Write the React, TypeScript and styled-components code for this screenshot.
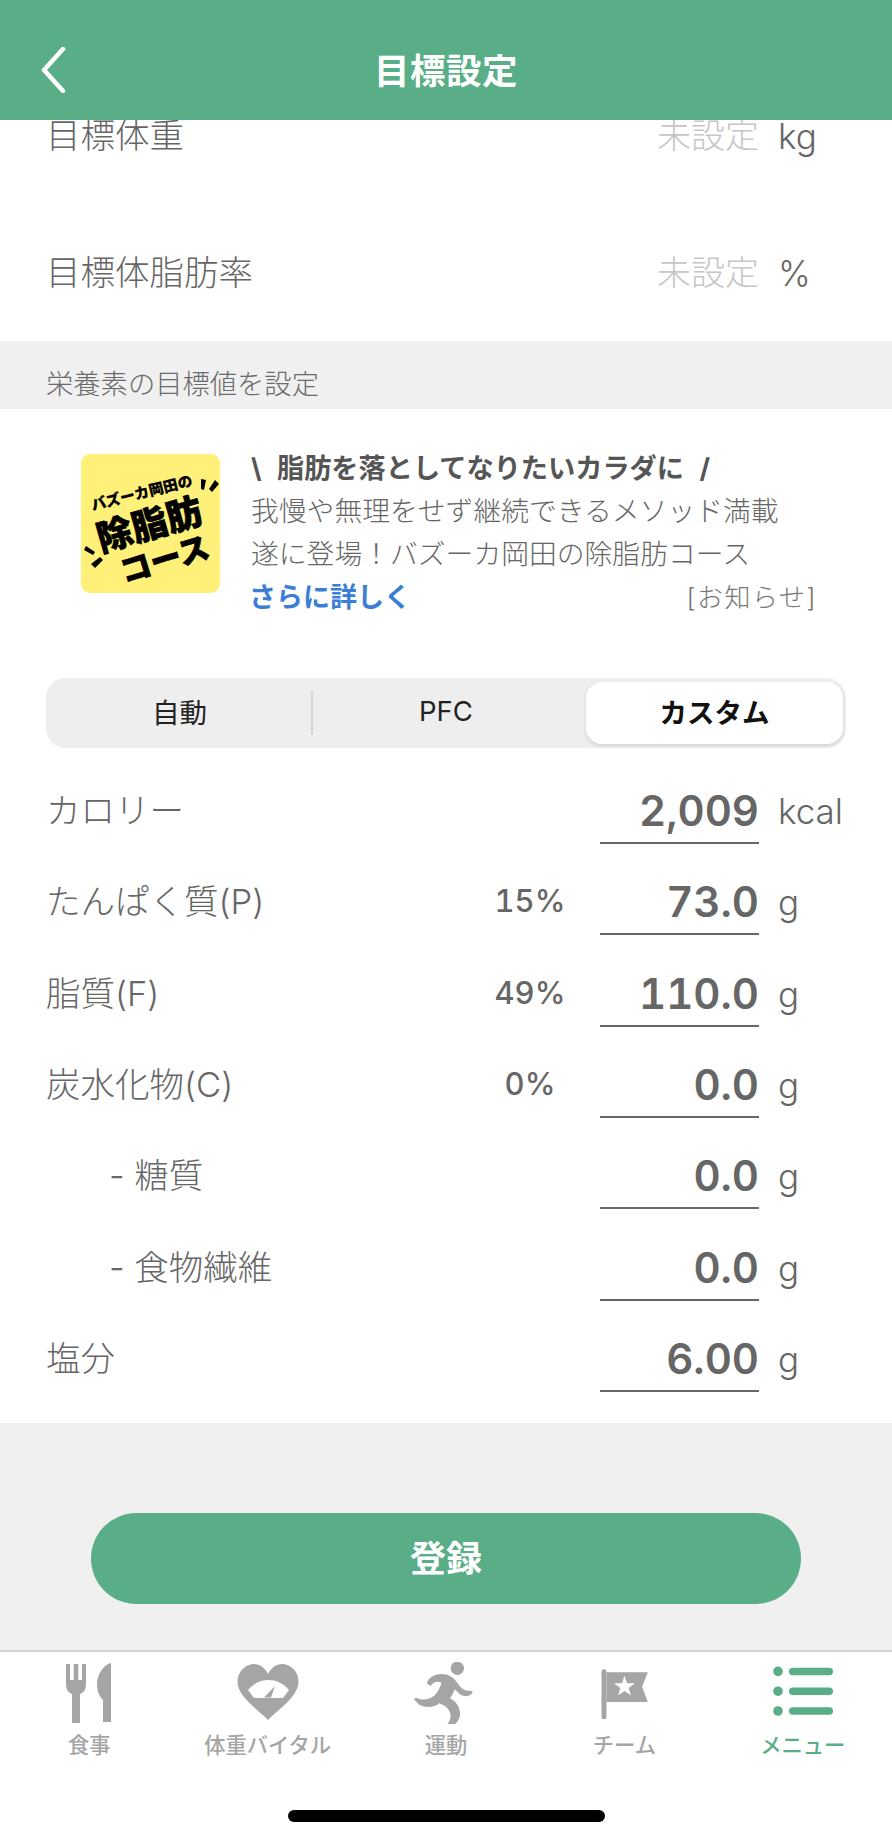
import React from "react";
import styled, { createGlobalStyle } from "styled-components";

const GREEN = "#5aae87";
const TEXT = "#666666";
const TAB_GREY = "#a5a5a5";
const FONT = `"Inter", "Noto Sans CJK JP", sans-serif`;

const GlobalStyle = createGlobalStyle`
  html, body {
    margin: 0;
    padding: 0;
    background: #fff;
  }
  * {
    box-sizing: border-box;
  }
`;

const Page = styled.div`
  width: 892px;
  height: 1840px;
  display: flex;
  flex-direction: column;
  overflow: hidden;
  background: #fff;
  font-family: ${FONT};
  color: ${TEXT};
`;

const Header = styled.header`
  position: relative;
  z-index: 2;
  flex: none;
  height: 120px;
  padding-top: 17px;
  display: grid;
  grid-template-columns: 1fr auto 1fr;
  align-items: center;
  background: ${GREEN};
`;

const BackButton = styled.div`
  display: flex;
  padding: 3px 0 0 40px;
`;

const Title = styled.h1`
  margin: 0;
  font-size: 35.5px;
  font-weight: 700;
  color: #fff;
  letter-spacing: 0.5px;
`;

const Scroller = styled.main`
  flex: 1;
  min-height: 0;
  overflow: hidden;
`;

const ScrollContent = styled.div`
  margin-top: -53px;
`;

const GoalRow = styled.div<{ $height: number }>`
  height: ${(p) => p.$height}px;
  padding-left: 46px;
  display: flex;
  align-items: center;
  background: #fff;
`;

const Label = styled.div<{ $indent?: boolean }>`
  flex: 1;
  font-size: 34.5px;
  font-weight: 300;
  line-height: 62px;
  white-space: nowrap;
  padding-left: ${(p) => (p.$indent ? "63px" : "0")};
`;

const Placeholder = styled.div`
  width: 159px;
  text-align: right;
  font-size: 34px;
  font-weight: 300;
  line-height: 62px;
  color: #c6c6c6;
`;

const Unit = styled.div`
  width: 114px;
  margin-left: 19px;
  font-size: 35px;
  font-weight: 300;
  line-height: 62px;
`;

const SectionHead = styled.div`
  height: 68px;
  padding: 0 0 8px 46px;
  display: flex;
  align-items: flex-end;
  background: #f0f0f0;
  font-size: 27.3px;
  font-weight: 300;
  line-height: 32px;
  color: #6b6b6b;
`;

const Banner = styled.section`
  height: 269px;
  padding: 38px 0 0 81px;
  display: flex;
  gap: 31px;
  background: #fff;
`;

const BannerLogo = styled.svg`
  flex: none;
  margin-top: 7px;
  width: 139px;
  height: 139px;
`;

const BannerBody = styled.div`
  flex: 1;
  font-size: 27.8px;
  line-height: 43px;
  font-weight: 300;
  white-space: nowrap;
`;

const BannerHeadline = styled.div`
  font-size: 27.2px;
  font-weight: 700;
  word-spacing: 9px;
  color: #555;
`;

const BannerFoot = styled.div`
  display: flex;
  justify-content: space-between;
  align-items: center;
  padding-right: 75px;
`;

const MoreLink = styled.a`
  margin-left: -2px;
  font-size: 27px;
  font-weight: 700;
  color: #3a7ed6;
`;

const Notice = styled.span`
  font-size: 26px;
  font-weight: 300;
  letter-spacing: 1.5px;
  color: #777;
`;

const SegmentBar = styled.div`
  margin: 0 46px;
  height: 70px;
  padding: 4px 3px 4px 0;
  display: flex;
  border-radius: 20px;
  background: #eeeeee;
`;

const Segment = styled.div<{ $width: number; $active?: boolean; $divider?: boolean }>`
  position: relative;
  flex: none;
  width: ${(p) => p.$width}px;
  padding-bottom: 4px;
  margin-left: ${(p) => (p.$active ? "7px" : "0")};
  display: flex;
  align-items: center;
  justify-content: center;
  border-radius: 16px;
  font-size: 27.5px;
  font-weight: ${(p) => (p.$active ? 700 : 400)};
  color: ${(p) => (p.$active ? "#111" : "#222")};
  background: ${(p) => (p.$active ? "#fff" : "transparent")};
  box-shadow: ${(p) => (p.$active ? "0 2px 4px rgba(0, 0, 0, 0.12)" : "none")};

  &::after {
    content: "";
    display: ${(p) => (p.$divider ? "block" : "none")};
    position: absolute;
    right: 0;
    top: 9px;
    bottom: 9px;
    width: 2px;
    background: #d6d6d6;
  }
`;

const NutrientList = styled.section`
  padding: 5px 0 30.4px;
  background: #fff;
`;

const NutrientRow = styled.div`
  height: 91.33px;
  padding: 27px 0 0 46px;
  display: flex;
  align-items: flex-start;
`;

const Percent = styled.div`
  flex: none;
  width: 90px;
  margin-right: 25px;
  text-align: center;
  font-size: 31px;
  font-weight: 500;
  font-feature-settings: "tnum";
  line-height: 60px;
`;

const ValueField = styled.div`
  flex: none;
  width: 159px;
  height: 64px;
  text-align: right;
  font-size: 42px;
  font-weight: 600;
  font-feature-settings: "tnum";
  line-height: 62px;
  border-bottom: 2px solid ${TEXT};
`;

const RegisterArea = styled.div`
  padding: 90px 91px 46px;
  background: #f0f0f0;
`;

const RegisterButton = styled.button`
  display: block;
  width: 100%;
  height: 91px;
  padding: 0 0 4px;
  border: none;
  border-radius: 46px;
  background: ${GREEN};
  color: #fff;
  font-family: ${FONT};
  font-size: 36px;
  font-weight: 700;
`;

const TabBar = styled.nav`
  flex: none;
  height: 190px;
  border-top: 2px solid #d2d2d2;
  background: #fff;
`;

const TabGrid = styled.div`
  padding-top: 10px;
  display: grid;
  grid-template-columns: repeat(5, 1fr);
`;

const Tab = styled.div<{ $active?: boolean }>`
  display: flex;
  flex-direction: column;
  align-items: center;
  color: ${(p) => (p.$active ? GREEN : TAB_GREY)};
`;

const TabIcon = styled.svg`
  display: block;
  width: 80px;
  height: 62px;
  fill: currentColor;
`;

const TabLabel = styled.span`
  margin-top: 6px;
  font-size: 21.3px;
  font-weight: 500;
  line-height: 30px;
`;

const HomeIndicator = styled.div`
  width: 317px;
  height: 12px;
  margin: 50px auto 0;
  border-radius: 6px;
  background: #000;
`;

const FoodIcon = () => (
  <TabIcon viewBox="0 0 80 62">
    <path d="M17 2H21V18H24.7V2H29.3V18H33V2H37V22C37 28 34 31 31 32V61H23V32C20 31 17 28 17 22Z" />
    <path d="M62 1C54 3 48 13 48 22C48 31 52 36 54 38V60H62Z" />
  </TabIcon>
);

const VitalIcon = () => (
  <TabIcon viewBox="0 0 80 62">
    <path d="M40 58C28 46 9 34 9.5 19C10 9 18 2 26 2C32 2 37 6 40 12C43 6 48 2 54 2C62 2 70.5 9 70.5 19C71 34 52 46 40 58Z" />
    <path fill="#fff" d="M20 28C26 21 33 18 40.5 18C48 18 55 21 61 28L55 36H26Z" />
    <path d="M47 24L36 35.5H43Z" />
  </TabIcon>
);

const RunIcon = () => (
  <TabIcon viewBox="0 0 80 62">
    <g transform="translate(-6 -12) scale(.3333)">
      <circle cx="172" cy="55" r="20" />
      <path d="M80 100C85 85 100 72 125 72C145 72 160 82 172 98C180 110 190 122 205 122L218 124C216 136 205 140 192 138C180 136 172 125 165 118C160 130 155 138 150 145C170 155 182 175 180 195C178 212 165 225 152 232L143 222C150 212 155 200 150 188C145 172 130 165 118 160C100 175 75 172 58 165L42 148L48 143C65 152 90 150 105 135C115 125 120 110 125 98C110 92 98 98 92 108Z" />
    </g>
  </TabIcon>
);

const TeamIcon = () => (
  <TabIcon viewBox="0 0 80 62">
    <g transform="translate(-138.5 -22) scale(.3333)">
      <rect x="468" y="88" width="15" height="150" rx="7" />
      <path d="M483 97H607L590 140L607 186H483Z" />
      <polygon
        fill="#fff"
        points="537,107 544.6,129.5 568.4,129.8 549.4,144 556.4,166.7 537,153 517.6,166.7 524.6,144 505.6,129.8 529.4,129.5"
      />
    </g>
  </TabIcon>
);

const MenuIcon = () => (
  <TabIcon viewBox="0 0 80 62">
    {[9.4, 29.2, 49].map((y) => (
      <g key={y}>
        <circle cx="15" cy={y} r="4.8" />
        <rect x="26" y={y - 3.75} width="44" height="7.5" rx="3.75" />
      </g>
    ))}
  </TabIcon>
);

const goals = [
  { label: "目標体重", unit: "kg", height: 138 },
  { label: "目標体脂肪率", unit: "%", height: 136 },
];

const nutrients = [
  { label: "カロリー", value: "2,009", unit: "kcal" },
  { label: "たんぱく質(P)", percent: "15%", value: "73.0", unit: "g" },
  { label: "脂質(F)", percent: "49%", value: "110.0", unit: "g" },
  { label: "炭水化物(C)", percent: "0%", value: "0.0", unit: "g" },
  { label: "- 糖質", indent: true, value: "0.0", unit: "g" },
  { label: "- 食物繊維", indent: true, value: "0.0", unit: "g" },
  { label: "塩分", value: "6.00", unit: "g" },
];

const tabs = [
  { label: "食事", icon: <FoodIcon /> },
  { label: "体重バイタル", icon: <VitalIcon /> },
  { label: "運動", icon: <RunIcon /> },
  { label: "チーム", icon: <TeamIcon /> },
  { label: "メニュー", icon: <MenuIcon />, active: true },
];

export default function App() {
  return (
    <Page>
      <GlobalStyle />
      <Header>
        <BackButton>
          <svg width="26" height="46" viewBox="0 0 26 46" fill="none">
            <path d="M23 2L4 23L23 44" stroke="#fff" strokeWidth="4.5" strokeLinecap="round" strokeLinejoin="round" />
          </svg>
        </BackButton>
        <Title>目標設定</Title>
      </Header>

      <Scroller>
        <ScrollContent>
          {goals.map((goal) => (
            <GoalRow key={goal.label} $height={goal.height}>
              <Label>{goal.label}</Label>
              <Placeholder>未設定</Placeholder>
              <Unit>{goal.unit}</Unit>
            </GoalRow>
          ))}

          <SectionHead>栄養素の目標値を設定</SectionHead>

          <Banner>
            <BannerLogo viewBox="0 0 139 139">
              <rect width="139" height="139" rx="9" fill="#fff07a" />
              <g fontFamily={FONT} fontWeight="900" fill="#000" stroke="#000" textAnchor="middle">
                <text transform="translate(62 44) rotate(-14)" fontSize="14.8" strokeWidth=".2">バズーカ岡田の</text>
                <text transform="translate(72 83) rotate(-16)" fontSize="36" strokeWidth=".7">除脂肪</text>
                <text transform="translate(87 116) rotate(-17)" fontSize="31" strokeWidth=".7">コース</text>
              </g>
              <g fill="#000">
                <polygon points="120,25 125,26 123,36 120,35" />
                <polygon points="134,26 138,30 131,38 128,35" />
                <polygon points="3,96 5,92 14,98 12,101" />
                <polygon points="19,103 22,106 14,114 10,110" />
              </g>
            </BannerLogo>
            <BannerBody>
              <BannerHeadline>\ 脂肪を落としてなりたいカラダに /</BannerHeadline>
              <div>我慢や無理をせず継続できるメソッド満載</div>
              <div>遂に登場！バズーカ岡田の除脂肪コース</div>
              <BannerFoot>
                <MoreLink>さらに詳しく</MoreLink>
                <Notice>[お知らせ]</Notice>
              </BannerFoot>
            </BannerBody>
          </Banner>

          <SegmentBar>
            <Segment $width={267} $divider>自動</Segment>
            <Segment $width={266}>PFC</Segment>
            <Segment $width={257} $active>カスタム</Segment>
          </SegmentBar>

          <NutrientList>
            {nutrients.map((row) => (
              <NutrientRow key={row.label}>
                <Label $indent={row.indent}>{row.label}</Label>
                <Percent>{row.percent}</Percent>
                <ValueField>{row.value}</ValueField>
                <Unit>{row.unit}</Unit>
              </NutrientRow>
            ))}
          </NutrientList>

          <RegisterArea>
            <RegisterButton>登録</RegisterButton>
          </RegisterArea>
        </ScrollContent>
      </Scroller>

      <TabBar>
        <TabGrid>
          {tabs.map((tab) => (
            <Tab key={tab.label} $active={tab.active}>
              {tab.icon}
              <TabLabel>{tab.label}</TabLabel>
            </Tab>
          ))}
        </TabGrid>
        <HomeIndicator />
      </TabBar>
    </Page>
  );
}
